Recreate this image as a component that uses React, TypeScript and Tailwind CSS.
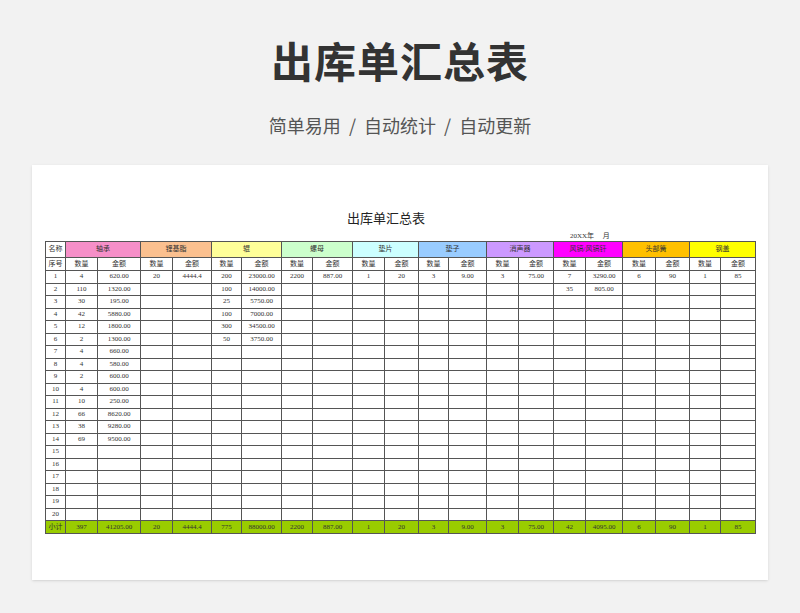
import React from "react";

const groups = [
  { name: "轴承", c: "bg-[#f68fc8]", w: [32, 43] },
  { name: "锂基脂", c: "bg-[#fbc08f]", w: [32, 39] },
  { name: "辊", c: "bg-[#ffff99]", w: [30, 40] },
  { name: "螺母", c: "bg-[#ccffcc]", w: [31, 40] },
  { name: "垫片", c: "bg-[#ccffff]", w: [32, 34] },
  { name: "垫子", c: "bg-[#99ccff]", w: [30, 38] },
  { name: "消声器", c: "bg-[#cc99ff]", w: [32, 35] },
  { name: "风镐/风镐钎", c: "bg-[#ff00ff]", w: [32, 37] },
  { name: "头部簧", c: "bg-[#ffc000]", w: [33, 34] },
  { name: "钢盖", c: "bg-[#ffff00]", w: [31, 35] },
];

const data: Record<number, string[]> = {
  1: ["4", "620.00", "20", "4444.4", "200", "23000.00", "2200", "887.00", "1", "20", "3", "9.00", "3", "75.00", "7", "3290.00", "6", "90", "1", "85"],
  2: ["110", "1320.00", "", "", "100", "14000.00", "", "", "", "", "", "", "", "", "35", "805.00"],
  3: ["30", "195.00", "", "", "25", "5750.00"],
  4: ["42", "5880.00", "", "", "100", "7000.00"],
  5: ["12", "1800.00", "", "", "300", "34500.00"],
  6: ["2", "1300.00", "", "", "50", "3750.00"],
  7: ["4", "660.00"],
  8: ["4", "580.00"],
  9: ["2", "600.00"],
  10: ["4", "600.00"],
  11: ["10", "250.00"],
  12: ["66", "8620.00"],
  13: ["38", "9280.00"],
  14: ["69", "9500.00"],
};
const total = ["397", "41205.00", "20", "4444.4", "775", "88000.00", "2200", "887.00", "1", "20", "3", "9.00", "3", "75.00", "42", "4095.00", "6", "90", "1", "85"];

const cell = "border border-[#555] text-center p-0 leading-none";

export default function App() {
  return (
    <div className="w-[800px] h-[613px] bg-[#f2f2f2] flex flex-col items-center" style={{ fontFamily: '"Noto Sans CJK SC", sans-serif' }}>
      <div className="mt-[32px] text-[42px] font-bold text-[#333] leading-[56px] tracking-[1px]">出库单汇总表</div>
      <div className="mt-[24px] text-[18px] text-[#555] leading-[26px]">简单易用 &nbsp;/&nbsp; 自动统计 &nbsp;/&nbsp; 自动更新</div>
      <div className="mt-[27px] w-[736px] h-[415px] bg-white shadow-sm flex flex-col pl-[13px]" style={{ fontFamily: '"Liberation Serif", "Noto Sans CJK SC", serif' }}>
        <div className="mt-[45px] ml-[302px] text-[13px] text-[#222] leading-[18px]">出库单汇总表</div>
        <div className="ml-[525px] text-[7px] text-[#333] leading-[10px] mt-[3px]">20XX年 &nbsp;&nbsp;&nbsp; 月</div>
        <table className="border-collapse text-[7px] text-[#333] table-fixed w-[710px]">
          <colgroup>
            <col style={{ width: 20 }} />
            {groups.flatMap((g, i) => [<col key={i + "a"} style={{ width: g.w[0] }} />, <col key={i + "b"} style={{ width: g.w[1] }} />])}
          </colgroup>
          <tbody>
            <tr className="h-[16px]">
              <td className={cell}>名称</td>
              {groups.map((g) => (
                <td key={g.name} colSpan={2} className={`${cell} ${g.c}`}>{g.name}</td>
              ))}
            </tr>
            <tr className="h-[13px]">
              <td className={cell}>序号</td>
              {groups.flatMap((g, i) => [
                <td key={i + "a"} className={cell}>数量</td>,
                <td key={i + "b"} className={cell}>金额</td>,
              ])}
            </tr>
            {Array.from({ length: 20 }, (_, r) => {
              const d = data[r + 1] || [];
              return (
                <tr key={r} className="h-[12.5px]">
                  <td className={cell}>{r + 1}</td>
                  {Array.from({ length: 20 }, (_, k) => (
                    <td key={k} className={cell}>{d[k] || ""}</td>
                  ))}
                </tr>
              );
            })}
            <tr className="h-[13px] bg-[#99cc00]">
              <td className={cell}>小计</td>
              {total.map((t, k) => (
                <td key={k} className={cell}>{t}</td>
              ))}
            </tr>
          </tbody>
        </table>
      </div>
    </div>
  );
}
